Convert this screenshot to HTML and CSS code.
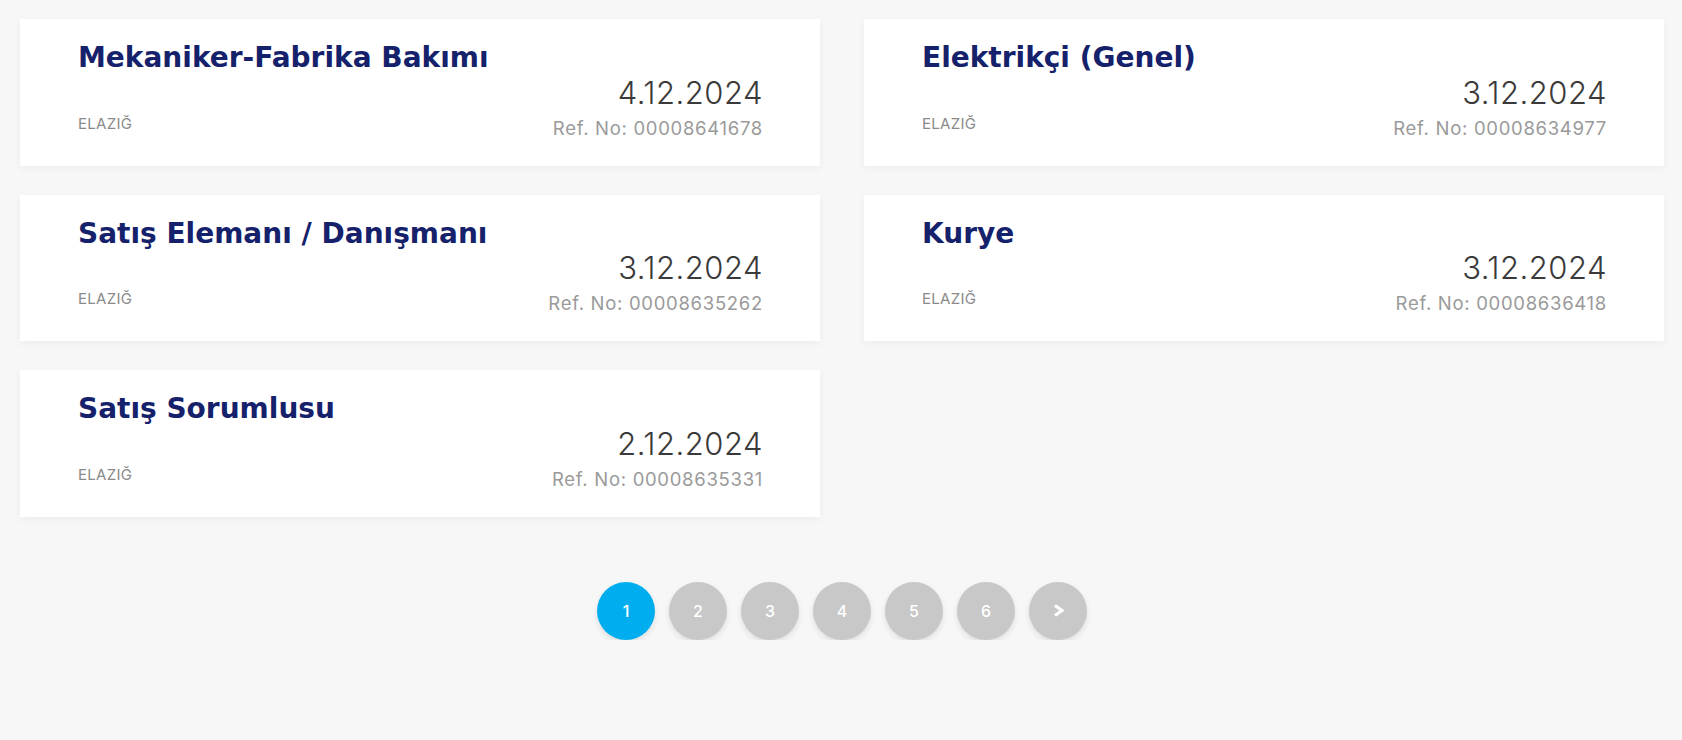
FILE: index.html
```html
<!DOCTYPE html>
<html>
<head>
    <title>İş İlanları</title>
    <link rel="stylesheet" href="styles.css">
</head>
<body>
    <div class="jobs">
        <div class="job-card">
            <h3 class="job-title">Mekaniker-Fabrika Bakımı</h3>
            <div class="job-meta">
                <span class="job-city">ELAZIĞ</span>
                <div class="job-info">
                    <div class="job-date">4.12.2024</div>
                    <div class="job-ref">Ref. No: 00008641678</div>
                </div>
            </div>
        </div>
        <div class="job-card">
            <h3 class="job-title">Elektrikçi (Genel)</h3>
            <div class="job-meta">
                <span class="job-city">ELAZIĞ</span>
                <div class="job-info">
                    <div class="job-date">3.12.2024</div>
                    <div class="job-ref">Ref. No: 00008634977</div>
                </div>
            </div>
        </div>
        <div class="job-card">
            <h3 class="job-title">Satış Elemanı / Danışmanı</h3>
            <div class="job-meta">
                <span class="job-city">ELAZIĞ</span>
                <div class="job-info">
                    <div class="job-date">3.12.2024</div>
                    <div class="job-ref">Ref. No: 00008635262</div>
                </div>
            </div>
        </div>
        <div class="job-card">
            <h3 class="job-title">Kurye</h3>
            <div class="job-meta">
                <span class="job-city">ELAZIĞ</span>
                <div class="job-info">
                    <div class="job-date">3.12.2024</div>
                    <div class="job-ref">Ref. No: 00008636418</div>
                </div>
            </div>
        </div>
        <div class="job-card">
            <h3 class="job-title">Satış Sorumlusu</h3>
            <div class="job-meta">
                <span class="job-city">ELAZIĞ</span>
                <div class="job-info">
                    <div class="job-date">2.12.2024</div>
                    <div class="job-ref">Ref. No: 00008635331</div>
                </div>
            </div>
        </div>
    </div>

    <ul class="pagination">
        <li><a href="#" class="active">1</a></li>
        <li><a href="#">2</a></li>
        <li><a href="#">3</a></li>
        <li><a href="#">4</a></li>
        <li><a href="#">5</a></li>
        <li><a href="#">6</a></li>
        <li>
            <a href="#" class="next">
                <svg width="11" height="13" viewBox="0 0 11 13">
                    <path d="M2 1.5 L9 6.5 L2 11.5" fill="none" stroke="#fff" stroke-width="3.2" stroke-linejoin="miter" stroke-linecap="butt"/>
                </svg>
            </a>
        </li>
    </ul>
</body>
</html>
```

FILE: styles.css
```css
body {
    margin: 0;
    padding: 19px 18px 0 20px;
    background-color: #f7f7f7;
    font-family: Inter, "Open Sans", Arial, sans-serif;
}
.jobs {
    display: grid;
    grid-template-columns: 800px 800px;
    column-gap: 44px;
    row-gap: 29px;
}
.job-card {
    background-color: #fff;
    padding: 22px 57px 24px 58px;
    box-shadow: 0 2px 8px rgba(0, 0, 0, 0.05);
}
.job-title {
    margin: 0;
    font-family: "DejaVu Sans", Inter, sans-serif;
    font-size: 28px;
    line-height: 33.6px;
    font-weight: 700;
    color: #15216b;
}
.job-meta {
    display: flex;
    justify-content: space-between;
    align-items: flex-end;
}
.job-city {
    font-size: 15px;
    line-height: 20px;
    letter-spacing: 0.3px;
    color: #8a8a8a;
    margin-bottom: 8px;
}
.job-info {
    text-align: right;
}
.job-date {
    font-size: 31px;
    line-height: 36px;
    font-weight: 300;
    letter-spacing: 0.5px;
    color: #3a3a3a;
}
.job-ref {
    margin-top: 3px;
    font-size: 18.5px;
    line-height: 28px;
    letter-spacing: 0.7px;
    color: #9a9a9a;
}
.pagination {
    list-style: none;
    margin: 65px 0 0;
    padding: 0;
    display: flex;
    justify-content: center;
    gap: 14px;
}
.pagination a {
    display: flex;
    align-items: center;
    justify-content: center;
    width: 58px;
    height: 58px;
    border-radius: 50%;
    background-color: #c8c8c8;
    color: #fff;
    font-size: 16px;
    font-weight: 500;
    text-decoration: none;
    box-shadow: 0 3px 6px rgba(0, 0, 0, 0.1);
}
.pagination a.active {
    background-color: #00aeef;
}
```
